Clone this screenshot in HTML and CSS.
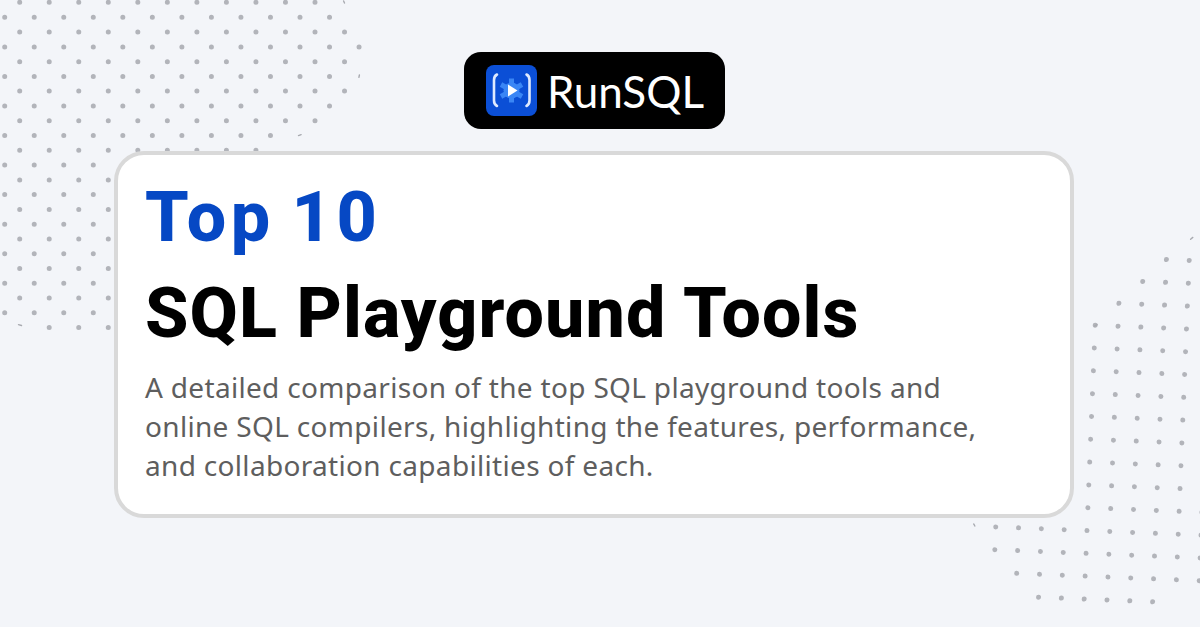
FILE: index.html
```html
<!DOCTYPE html>
<html lang="en">
<head>
    <meta charset="UTF-8">
    <meta name="viewport" content="width=device-width, initial-scale=1.0">
    <title>Top 10 SQL Playground Tools</title>
    <link rel="stylesheet" href="styles.css">
</head>
<body>
    <!-- dot decorations behind the card, one dashed path per row -->
    <svg class="dots" viewBox="0 0 1200 627" aria-hidden="true">
        <g class="dot-rows dot-rows-left">
            <path d="M19.7 2.3H316"/>
            <path d="M4.7 17.3H331"/>
            <path d="M19.7 32H346"/>
            <path d="M4.7 47H361"/>
            <path d="M19.7 61.7H346"/>
            <path d="M4.7 76.4H331"/>
            <path d="M19.7 91H346"/>
            <path d="M4.7 106H331"/>
            <path d="M19.7 120.7H316"/>
            <path d="M4.7 135.4H272"/>
            <path d="M19.7 150.2H257"/>
            <path d="M4.7 165H94"/>
            <path d="M19.7 180H109"/>
            <path d="M4.7 194.6H94"/>
            <path d="M19.7 209.4H109"/>
            <path d="M4.7 224.2H94"/>
            <path d="M19.7 239H109"/>
            <path d="M4.7 253.7H94"/>
            <path d="M19.7 268.4H109"/>
            <path d="M4.7 283.2H94"/>
            <path d="M19.7 298H109"/>
            <path d="M4.7 312.8H94"/>
            <path d="M49.2 327.6H109"/>
        </g>
        <g class="dot-rows dot-rows-right" transform="translate(1094.3 348) rotate(2.3)">
            <path d="M68.5 -91.3H92"/>
            <path d="M45.7 -68.5H92"/>
            <path d="M22.8 -45.7H92"/>
            <path d="M0 -22.8H92"/>
            <path d="M0 0H115"/>
            <path d="M0 22.8H115"/>
            <path d="M0 45.7H115"/>
            <path d="M0 68.5H115"/>
            <path d="M0 91.3H115"/>
            <path d="M0 114.2H115"/>
            <path d="M0 137H115"/>
            <path d="M0 159.8H115"/>
            <path d="M-91.3 182.7H115"/>
            <path d="M-91.3 205.5H115"/>
            <path d="M-68.5 228.3H115"/>
            <path d="M-45.7 251.2H69"/>
        </g>
        <!-- dots cut off at the edge of the shape -->
        <g class="dot-bits">
            <path d="M343.6 1l.9 2"/>
            <path d="M359.4 75l-.5 2.4"/>
            <path d="M298.5 135.6l2.6-1"/>
            <path d="M18.5 324.6l3 .9"/>
            <path d="M1190.6 239.2l2.2-1.8"/>
            <path d="M1094.6 326.2l2.4-1.6"/>
            <path d="M973.8 524l1 2"/>
        </g>
    </svg>

    <div class="page">
        <div class="logo">
            <svg class="logo-icon" viewBox="0 0 51 51" aria-hidden="true">
                <rect width="51" height="51" rx="8" fill="#0b4fd6"/>
                <path class="bracket" d="M11 9.5Q8 11 8 15V35.5Q8 39.5 11 41"/>
                <path class="bracket" d="M40.5 9.5Q43.5 11 43.5 15V35.5Q43.5 39.5 40.5 41"/>
                <g class="asterisk">
                    <path d="M25.5 13.5V37.5"/>
                    <path d="M15 19.5L36 31.5"/>
                    <path d="M36 19.5L15 31.5"/>
                </g>
                <circle cx="25.5" cy="25.5" r="8" fill="#3a86f5"/>
                <path d="M22 19.5L31.5 25.5L22 31.5Z" fill="#fff"/>
            </svg>
            <span class="logo-text">RunSQL</span>
        </div>

        <div class="card">
            <h1 class="title"><span class="accent">Top 10</span>SQL Playground Tools</h1>
            <p class="desc">A detailed comparison of the top SQL playground tools and<br>online SQL compilers, highlighting the features, performance,<br>and collaboration capabilities of each.</p>
        </div>
    </div>
</body>
</html>
```

FILE: styles.css
```css
html, body {
    margin: 0;
    height: 100%;
}
body {
    position: relative;
    overflow: hidden;
    background-color: #f3f5f9;
    font-family: "Noto Sans", sans-serif;
}
.dots {
    position: absolute;
    left: 0;
    top: 0;
    width: 1200px;
    height: 627px;
}
.dot-rows path {
    fill: none;
    stroke: #b2b4ba;
    stroke-width: 5;
    stroke-linecap: round;
}
.dot-rows-left path {
    stroke-dasharray: 0 29.53;
}
.dot-rows-right path {
    stroke-dasharray: 0 22.83;
}
.dot-bits path {
    fill: none;
    stroke: #a8aab0;
    stroke-width: 1.4;
    stroke-linecap: round;
}
.page {
    position: relative;
    display: flex;
    flex-direction: column;
    align-items: flex-start;
    padding: 52px 0 0 114px;
}
.logo {
    display: flex;
    align-items: center;
    gap: 10px;
    box-sizing: border-box;
    width: 261px;
    height: 77px;
    margin-left: 350px;
    padding-left: 22px;
    background-color: #000;
    border-radius: 17px;
}
.logo-icon {
    width: 51px;
    height: 51px;
    flex: none;
}
.bracket {
    fill: none;
    stroke: #dfeaff;
    stroke-width: 2.6;
    stroke-linecap: round;
}
.asterisk path {
    fill: none;
    stroke: #3a86f5;
    stroke-width: 5;
}
.logo-text {
    font-family: Lato, sans-serif;
    font-size: 44px;
    color: #fff;
}
.card {
    box-sizing: border-box;
    width: 960px;
    height: 367px;
    margin-top: 22px;
    padding: 14px 27px;
    background-color: #fff;
    border: 4px solid #d9d9d9;
    border-radius: 30px;
}
.title {
    margin: 0;
    font-family: Roboto, sans-serif;
    font-size: 70px;
    font-weight: 800;
    line-height: 96px;
    letter-spacing: 1.1px;
    color: #000;
}
.accent {
    display: block;
    letter-spacing: 4.5px;
    word-spacing: -5px;
    color: #0648c4;
}
.desc {
    margin: 7px 0 0;
    font-size: 28px;
    line-height: 39px;
    letter-spacing: 0.32px;
    color: #5e5e5e;
}
```
